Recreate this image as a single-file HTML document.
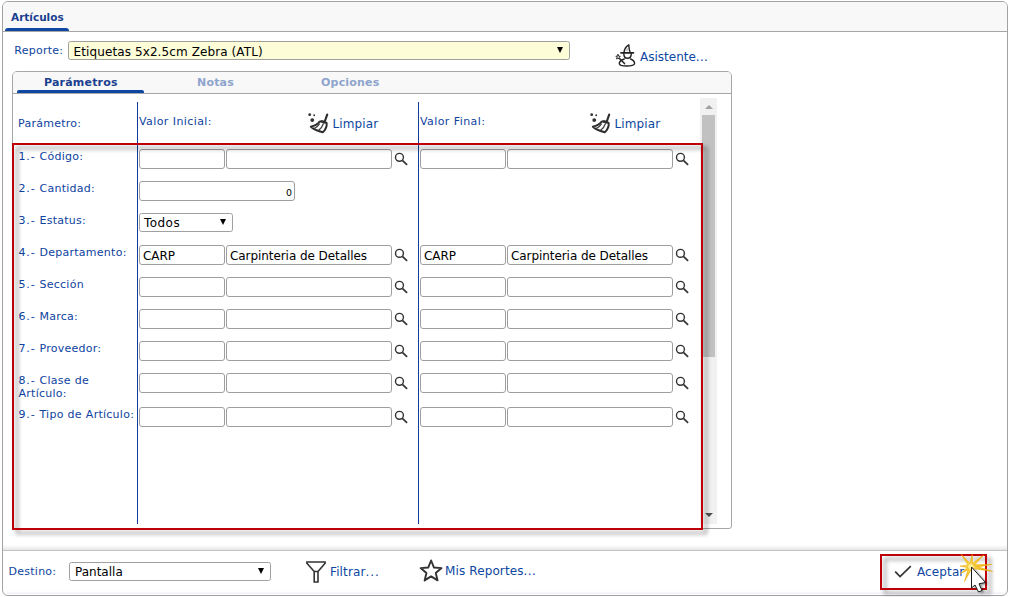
<!DOCTYPE html>
<html><head><meta charset="utf-8">
<style>
html,body{margin:0;padding:0;background:#fff;}
body{width:1011px;height:597px;position:relative;overflow:hidden;font-family:"DejaVu Sans","Liberation Sans",sans-serif;color:#1f4e9c;}
.abs{position:absolute;}
#outer{left:2px;top:1px;width:1004px;height:593px;border:1px solid #a2a2a2;border-radius:6px;box-sizing:content-box;background:#fff;}
#hdr{left:3px;top:2px;width:1004px;height:29px;background:#f8f8f8;border-bottom:1px solid #a6a6a6;border-radius:5px 5px 0 0;}
#hdrtxt{left:11px;top:11px;font:bold 10.5px "DejaVu Sans",sans-serif;color:#1a3f8f;line-height:13px;}
#hdrbar{left:5px;top:28px;width:64px;height:3px;background:#0d47a1;border-radius:3px 3px 0 0;}
.lbl{font-size:11px;letter-spacing:0.26px;word-spacing:0.2px;line-height:13px;color:#0e43a0;white-space:nowrap;}
.sel{box-sizing:border-box;border:1px solid #a0a0a0;border-radius:2.5px;background:#fff;color:#000;font-size:12px;line-height:16px;white-space:nowrap;}
.sel .tx{position:absolute;left:4px;top:1px;}
.sel .ar{position:absolute;right:6px;top:4.6px;width:0;height:0;border-left:3.2px solid transparent;border-right:3.2px solid transparent;border-top:6.2px solid #000;}
.lnk{font-size:12px;line-height:15px;color:#0d47a1;white-space:nowrap;letter-spacing:0.12px;}
#panel{left:12px;top:71px;width:718px;height:456px;border:1px solid #a6a6a6;border-radius:5px 5px 3px 3px;background:#fff;}
#phdr{left:13px;top:72px;width:718px;height:21px;background:#f8f8f8;border-bottom:1px solid #a6a6a6;border-radius:4px 4px 0 0;}
.tab{font:bold 11px "DejaVu Sans",sans-serif;letter-spacing:0.2px;line-height:13px;top:76px;white-space:nowrap;}
.vl{width:1px;background:#123c9c;top:102px;height:422px;}
.inp{box-sizing:border-box;border:1px solid #9e9e9e;border-radius:3px;background:#fff;height:20px;color:#000;font-size:12px;line-height:20px;padding-left:3px;letter-spacing:-0.07px;white-space:nowrap;overflow:hidden;}
.pf{letter-spacing:0.85px;}
</style></head><body>
<div id="outer" class="abs"></div>
<div id="hdr" class="abs"></div>
<div id="hdrtxt" class="abs">Artículos</div>
<div id="hdrbar" class="abs"></div>

<div class="abs lbl" style="left:14.3px;top:44px;">Reporte:</div>
<div class="abs sel" style="left:68px;top:41px;width:502px;height:19px;background:#fdfdd8;"><span class="tx" style="left:4.6px;top:1.7px;letter-spacing:0.1px;">Etiquetas 5x2.5cm Zebra (ATL)</span><span class="ar"></span></div>
<div class="abs lnk" style="left:640px;top:50px;letter-spacing:0;">Asistente<span style="letter-spacing:0.3px">...</span></div>

<div id="panel" class="abs"></div>
<div id="phdr" class="abs"></div>
<div class="abs tab" style="left:44px;color:#1a3f8f;">Parámetros</div>
<div class="abs" style="left:17px;top:90px;width:127px;height:3px;background:#0d47a1;border-radius:2px 2px 0 0;"></div>
<div class="abs tab" style="left:197px;color:#8ea4cc;">Notas</div>
<div class="abs tab" style="left:321px;color:#8ea4cc;">Opciones</div>

<div class="abs lbl" style="left:18px;top:117px;">Parámetro:</div>
<div class="abs lbl" style="left:139px;top:115px;letter-spacing:0.4px;">Valor Inicial:</div>
<div class="abs lnk" style="left:332.5px;top:117px;">Limpiar</div>
<div class="abs lbl" style="left:420px;top:115px;letter-spacing:0.4px;">Valor Final:</div>
<div class="abs lnk" style="left:614.5px;top:117px;">Limpiar</div>
<div class="abs vl" style="left:137px;"></div>
<div class="abs vl" style="left:418px;"></div>

<!-- scrollbar -->
<div class="abs" style="left:700px;top:98px;width:17px;height:426px;background:#f1f1f1;"></div>
<div class="abs" style="left:702px;top:115px;width:13px;height:242px;background:#c1c1c1;"></div>
<div class="abs" style="left:704.5px;top:105px;width:0;height:0;border-left:4px solid transparent;border-right:4px solid transparent;border-bottom:4px solid #a0a0a0;"></div>
<div class="abs" style="left:704.5px;top:513px;width:0;height:0;border-left:4px solid transparent;border-right:4px solid transparent;border-top:4px solid #505050;"></div>

<div id="rows">
<div class="abs lbl" style="left:18.5px;top:150px;"><span class="pf">1.-</span> Código:</div>
<div class="abs inp" style="left:139px;top:149px;width:86px;"></div>
<div class="abs inp" style="left:226px;top:149px;width:166px;"></div>
<svg class="abs mag" style="left:394px;top:152px;" width="16" height="16" viewBox="0 0 16 16"><circle cx="5.45" cy="5.35" r="3.95" fill="none" stroke="#333" stroke-width="1.4"/><path d="M8.4 8.3 L13.1 12.8" stroke="#333" stroke-width="1.7" stroke-linecap="butt"/></svg>
<div class="abs inp" style="left:420px;top:149px;width:86px;"></div>
<div class="abs inp" style="left:507px;top:149px;width:166px;"></div>
<svg class="abs mag" style="left:675px;top:152px;" width="16" height="16" viewBox="0 0 16 16"><circle cx="5.45" cy="5.35" r="3.95" fill="none" stroke="#333" stroke-width="1.4"/><path d="M8.4 8.3 L13.1 12.8" stroke="#333" stroke-width="1.7" stroke-linecap="butt"/></svg>
<div class="abs lbl" style="left:18.5px;top:182px;"><span class="pf">2.-</span> Cantidad:</div>
<div class="abs inp" style="left:139px;top:181px;width:156px;text-align:right;padding-right:2px;font-size:9.5px;line-height:21px;">0</div>
<div class="abs lbl" style="left:18.5px;top:214px;"><span class="pf">3.-</span> Estatus:</div>
<div class="abs sel" style="left:139px;top:213px;width:94px;height:19px;"><span class="tx" style="letter-spacing:0.45px;">Todos</span><span class="ar"></span></div>
<div class="abs lbl" style="left:18.5px;top:246px;"><span class="pf">4.-</span> Departamento:</div>
<div class="abs inp" style="left:139px;top:245px;width:86px;">CARP</div>
<div class="abs inp" style="left:226px;top:245px;width:166px;">Carpinteria de Detalles</div>
<svg class="abs mag" style="left:394px;top:248px;" width="16" height="16" viewBox="0 0 16 16"><circle cx="5.45" cy="5.35" r="3.95" fill="none" stroke="#333" stroke-width="1.4"/><path d="M8.4 8.3 L13.1 12.8" stroke="#333" stroke-width="1.7" stroke-linecap="butt"/></svg>
<div class="abs inp" style="left:420px;top:245px;width:86px;">CARP</div>
<div class="abs inp" style="left:507px;top:245px;width:166px;">Carpinteria de Detalles</div>
<svg class="abs mag" style="left:675px;top:248px;" width="16" height="16" viewBox="0 0 16 16"><circle cx="5.45" cy="5.35" r="3.95" fill="none" stroke="#333" stroke-width="1.4"/><path d="M8.4 8.3 L13.1 12.8" stroke="#333" stroke-width="1.7" stroke-linecap="butt"/></svg>
<div class="abs lbl" style="left:18.5px;top:278px;"><span class="pf">5.-</span> Sección</div>
<div class="abs inp" style="left:139px;top:277px;width:86px;"></div>
<div class="abs inp" style="left:226px;top:277px;width:166px;"></div>
<svg class="abs mag" style="left:394px;top:280px;" width="16" height="16" viewBox="0 0 16 16"><circle cx="5.45" cy="5.35" r="3.95" fill="none" stroke="#333" stroke-width="1.4"/><path d="M8.4 8.3 L13.1 12.8" stroke="#333" stroke-width="1.7" stroke-linecap="butt"/></svg>
<div class="abs inp" style="left:420px;top:277px;width:86px;"></div>
<div class="abs inp" style="left:507px;top:277px;width:166px;"></div>
<svg class="abs mag" style="left:675px;top:280px;" width="16" height="16" viewBox="0 0 16 16"><circle cx="5.45" cy="5.35" r="3.95" fill="none" stroke="#333" stroke-width="1.4"/><path d="M8.4 8.3 L13.1 12.8" stroke="#333" stroke-width="1.7" stroke-linecap="butt"/></svg>
<div class="abs lbl" style="left:18.5px;top:310px;"><span class="pf">6.-</span> Marca:</div>
<div class="abs inp" style="left:139px;top:309px;width:86px;"></div>
<div class="abs inp" style="left:226px;top:309px;width:166px;"></div>
<svg class="abs mag" style="left:394px;top:312px;" width="16" height="16" viewBox="0 0 16 16"><circle cx="5.45" cy="5.35" r="3.95" fill="none" stroke="#333" stroke-width="1.4"/><path d="M8.4 8.3 L13.1 12.8" stroke="#333" stroke-width="1.7" stroke-linecap="butt"/></svg>
<div class="abs inp" style="left:420px;top:309px;width:86px;"></div>
<div class="abs inp" style="left:507px;top:309px;width:166px;"></div>
<svg class="abs mag" style="left:675px;top:312px;" width="16" height="16" viewBox="0 0 16 16"><circle cx="5.45" cy="5.35" r="3.95" fill="none" stroke="#333" stroke-width="1.4"/><path d="M8.4 8.3 L13.1 12.8" stroke="#333" stroke-width="1.7" stroke-linecap="butt"/></svg>
<div class="abs lbl" style="left:18.5px;top:342px;"><span class="pf">7.-</span> Proveedor:</div>
<div class="abs inp" style="left:139px;top:341px;width:86px;"></div>
<div class="abs inp" style="left:226px;top:341px;width:166px;"></div>
<svg class="abs mag" style="left:394px;top:344px;" width="16" height="16" viewBox="0 0 16 16"><circle cx="5.45" cy="5.35" r="3.95" fill="none" stroke="#333" stroke-width="1.4"/><path d="M8.4 8.3 L13.1 12.8" stroke="#333" stroke-width="1.7" stroke-linecap="butt"/></svg>
<div class="abs inp" style="left:420px;top:341px;width:86px;"></div>
<div class="abs inp" style="left:507px;top:341px;width:166px;"></div>
<svg class="abs mag" style="left:675px;top:344px;" width="16" height="16" viewBox="0 0 16 16"><circle cx="5.45" cy="5.35" r="3.95" fill="none" stroke="#333" stroke-width="1.4"/><path d="M8.4 8.3 L13.1 12.8" stroke="#333" stroke-width="1.7" stroke-linecap="butt"/></svg>
<div class="abs lbl" style="left:18.5px;top:374px;"><span class="pf">8.-</span> Clase de<br>Artículo:</div>
<div class="abs inp" style="left:139px;top:373px;width:86px;"></div>
<div class="abs inp" style="left:226px;top:373px;width:166px;"></div>
<svg class="abs mag" style="left:394px;top:376px;" width="16" height="16" viewBox="0 0 16 16"><circle cx="5.45" cy="5.35" r="3.95" fill="none" stroke="#333" stroke-width="1.4"/><path d="M8.4 8.3 L13.1 12.8" stroke="#333" stroke-width="1.7" stroke-linecap="butt"/></svg>
<div class="abs inp" style="left:420px;top:373px;width:86px;"></div>
<div class="abs inp" style="left:507px;top:373px;width:166px;"></div>
<svg class="abs mag" style="left:675px;top:376px;" width="16" height="16" viewBox="0 0 16 16"><circle cx="5.45" cy="5.35" r="3.95" fill="none" stroke="#333" stroke-width="1.4"/><path d="M8.4 8.3 L13.1 12.8" stroke="#333" stroke-width="1.7" stroke-linecap="butt"/></svg>
<div class="abs lbl" style="left:18.5px;top:408px;"><span class="pf">9.-</span> Tipo de Artículo:</div>
<div class="abs inp" style="left:139px;top:407px;width:86px;"></div>
<div class="abs inp" style="left:226px;top:407px;width:166px;"></div>
<svg class="abs mag" style="left:394px;top:410px;" width="16" height="16" viewBox="0 0 16 16"><circle cx="5.45" cy="5.35" r="3.95" fill="none" stroke="#333" stroke-width="1.4"/><path d="M8.4 8.3 L13.1 12.8" stroke="#333" stroke-width="1.7" stroke-linecap="butt"/></svg>
<div class="abs inp" style="left:420px;top:407px;width:86px;"></div>
<div class="abs inp" style="left:507px;top:407px;width:166px;"></div>
<svg class="abs mag" style="left:675px;top:410px;" width="16" height="16" viewBox="0 0 16 16"><circle cx="5.45" cy="5.35" r="3.95" fill="none" stroke="#333" stroke-width="1.4"/><path d="M8.4 8.3 L13.1 12.8" stroke="#333" stroke-width="1.7" stroke-linecap="butt"/></svg>
</div><!--endrows-->

<!-- red highlight -->
<div class="abs" style="left:12px;top:143px;width:687px;height:383px;border:2px solid #be0008;filter:drop-shadow(4px 4px 2px rgba(0,0,0,.42));"></div>

<!-- icons -->
<svg class="abs" style="left:612px;top:40px;" width="28" height="30" viewBox="0 0 28 30" fill="none" stroke="#222" stroke-width="1.4" stroke-linecap="round" stroke-linejoin="round"><path d="M8.9 12.9 L21.5 12.9" stroke-width="1.6"/><path d="M12 12.4 C12.4 8.6 14 6.4 16.8 4.8 C16.9 7.5 17.2 10 18.1 12.4"/><path d="M14.3 11 L15.2 8.3 L15.9 11" stroke="#aaa" stroke-width="0.7"/><path d="M11.8 13.5 C11.8 16.8 13.6 18.3 15.5 18.3 C17.4 18.3 19.3 16.8 19.3 13.5"/><path d="M12.3 19 C9.5 19.9 7.3 21.8 7.3 23.4 C7.3 26.8 22.6 26.8 22.6 23.4 C22.6 21.8 20.8 19.9 18.6 19"/><path d="M7.8 18.8 L12.5 23.6" stroke-width="1.5"/><path d="M6 14.5 L6.7 16.1 L8.4 16.4 L7.1 17.5 L7.4 19.2 L6 18.2 L4.4 18.9 L5 17.3 L3.8 16.1 L5.5 16.1 Z" stroke-width="0.9" fill="#ddd"/></svg>
<svg class="abs" style="left:300px;top:104px;" width="40" height="34" viewBox="0 0 40 34"><circle cx="9.7" cy="10.7" r="1.4" fill="#333"/><circle cx="14.2" cy="11.2" r="0.95" fill="#333"/><circle cx="12.25" cy="16.1" r="1.95" fill="#333"/><path d="M27.2 10.6 L25 16.8" stroke="#2e2e2e" stroke-width="2.1" stroke-linecap="round" fill="none"/><path d="M19.6 17.7 Q23 16.2 26.7 19 Q27.2 24.2 22.8 28.3 Q15.5 26.6 10.8 22.7 Q16.5 21.6 19.6 17.7 Z" stroke="#2e2e2e" stroke-width="1.9" stroke-linejoin="round" fill="#fff"/><path d="M14.4 24.4 Q17.4 23.2 19.6 19.6 M18.6 26.2 Q22 24 23.6 19.2" stroke="#444" stroke-width="1.3" fill="none"/><path d="M20.5 17.8 Q23 17 25.8 19" stroke="#2e2e2e" stroke-width="2.2" fill="none"/></svg>
<svg class="abs" style="left:582px;top:104px;" width="40" height="34" viewBox="0 0 40 34"><circle cx="9.7" cy="10.7" r="1.4" fill="#333"/><circle cx="14.2" cy="11.2" r="0.95" fill="#333"/><circle cx="12.25" cy="16.1" r="1.95" fill="#333"/><path d="M27.2 10.6 L25 16.8" stroke="#2e2e2e" stroke-width="2.1" stroke-linecap="round" fill="none"/><path d="M19.6 17.7 Q23 16.2 26.7 19 Q27.2 24.2 22.8 28.3 Q15.5 26.6 10.8 22.7 Q16.5 21.6 19.6 17.7 Z" stroke="#2e2e2e" stroke-width="1.9" stroke-linejoin="round" fill="#fff"/><path d="M14.4 24.4 Q17.4 23.2 19.6 19.6 M18.6 26.2 Q22 24 23.6 19.2" stroke="#444" stroke-width="1.3" fill="none"/><path d="M20.5 17.8 Q23 17 25.8 19" stroke="#2e2e2e" stroke-width="2.2" fill="none"/></svg>
<svg class="abs" style="left:296px;top:552px;" width="40" height="34" viewBox="0 0 40 34" fill="none" stroke="#333" stroke-width="1.6" stroke-linejoin="miter"><path d="M10.9 10 L29.1 10 L29.1 11.2 L22 19.5 L22 30 L18.2 30 L18.2 19.5 L10.9 11.2 Z M18.2 19.5 L22 19.5"/></svg>
<svg class="abs" style="left:412px;top:552px;" width="40" height="34" viewBox="0 0 40 34" fill="none" stroke="#333" stroke-width="1.9" stroke-linejoin="round"><polygon points="19.10,8.50 21.98,15.54 29.56,16.10 23.76,21.01 25.57,28.40 19.10,24.40 12.63,28.40 14.44,21.01 8.64,16.10 16.22,15.54"/></svg>
<svg class="abs" style="left:890px;top:560px;" width="26" height="22" viewBox="0 0 26 22" fill="none" stroke="#333" stroke-width="1.7" stroke-linecap="butt" stroke-linejoin="miter"><path d="M5.2 11.6 L10.1 16.6 L20.8 6.2"/></svg>
<!-- footer -->
<div class="abs" style="left:6px;top:591px;width:998px;height:3px;background:linear-gradient(#fff,#edf1f7);border-radius:0 0 4px 4px;"></div>
<div class="abs" style="left:3px;top:545px;width:1004px;height:6px;background:linear-gradient(#fff,#e6e6e6);border-bottom:1px solid #c4c4c4;box-sizing:border-box;"></div>
<div class="abs lbl" style="left:8.5px;top:564.5px;">Destino:</div>
<div class="abs sel" style="left:69px;top:562px;width:202px;height:19px;"><span class="tx" style="left:5px">Pantalla</span><span class="ar"></span></div>
<div class="abs lnk" style="left:330px;top:565px;">Filtrar<span style="letter-spacing:1px">...</span></div>
<div class="abs lnk" style="left:445px;top:564px;">Mis Reportes<span style="letter-spacing:0.4px">...</span></div>
<div class="abs lnk" style="left:917px;top:565px;">Aceptar</div>
<div class="abs" style="left:880px;top:554px;width:103px;height:32px;border:2px solid #be0008;filter:drop-shadow(4px 4px 2px rgba(0,0,0,.42));"></div>
<svg class="abs" style="left:955px;top:548px;" width="45" height="49" viewBox="0 0 45 49"><defs><radialGradient id="bg" cx="15.9" cy="18.5" r="14" gradientUnits="userSpaceOnUse"><stop offset="0" stop-color="#fff3a0"/><stop offset="0.3" stop-color="#fad24a"/><stop offset="1" stop-color="#f3b000"/></radialGradient></defs><g id="rays" fill="url(#bg)" stroke="#eaa800" stroke-width="0.5" stroke-linejoin="round"><polygon points="6.1,6.2 17.3,17.4 14.5,19.6"/><polygon points="17.2,6.6 17.7,18.7 14.1,18.3"/><polygon points="28.7,7.0 17.1,19.8 14.7,17.2"/><polygon points="36.9,16.4 16.1,20.3 15.7,16.7"/><polygon points="37.7,23.4 15.5,20.3 16.3,16.7"/><polygon points="4.9,18.1 16.0,16.7 15.8,20.3"/><polygon points="5.7,25.5 14.9,17.0 16.9,20.0"/><polygon points="9.4,33.7 14.2,17.8 17.6,19.2"/></g><circle cx="15.9" cy="18.5" r="2.6" fill="#fff0a0"/><path d="M16.5 19 L16.5 40 L20 37 L23.5 44 L27 42.5 L24 35.8 L30.5 34.5 Z" fill="rgba(0,0,0,.4)" transform="translate(2.5,1.5)" style="filter:blur(1px)"/><path d="M16.5 19 L16.5 40 L20 37 L23.5 44 L27 42.5 L24 35.8 L30.5 34.5 Z" fill="#fff" stroke="#1a1a1a" stroke-width="1" stroke-linejoin="miter"/></svg>
</body></html>
